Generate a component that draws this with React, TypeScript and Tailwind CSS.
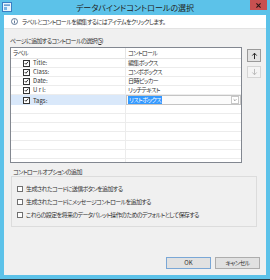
import React from 'react'

const ROWS = [
  { label: 'Title:', control: '編集ボックス' },
  { label: 'Class:', control: 'コンボボックス' },
  { label: 'Date:', control: '日時ピッカー' },
  { label: 'U r l:', control: 'リッチテキスト' },
]

const OPTIONS = [
  '生成されたコードに送信ボタンを追加する',
  '生成されたコードにメッセージコントロールを追加する',
  'これらの設定を将来のデータパレット操作のためのデフォルトとして保存する',
]

function RowCheck() {
  return (
    <div className="w-[7px] h-[7px] border border-[#333] bg-white flex items-center justify-center shrink-0">
      <svg viewBox="0 0 7 7" className="w-[6px] h-[6px]">
        <path d="M1 3.6L2.7 5.3L6 1.4" stroke="#222" strokeWidth="1.3" fill="none" />
      </svg>
    </div>
  )
}

export default function App() {
  return (
    <div className="w-[270px] h-[280px] bg-[#5cc2e9] flex flex-col overflow-hidden border-b border-[#2d3a44] font-['Noto_Sans_CJK_JP',sans-serif] [font-feature-settings:'palt'] text-[#333]">
      {/* title bar */}
      <div className="h-[15px] flex">
        <div className="w-[20px] pl-[2px] pt-[2px]">
          <svg viewBox="0 0 10 10" className="w-[10px] h-[10px]">
            <rect x="0.5" y="0.5" width="9" height="9" fill="#eaf5fc" stroke="#3a7fc4" />
            <rect x="2" y="2.5" width="6" height="1.2" fill="#3a7fc4" />
            <rect x="2" y="5" width="3" height="3" fill="#7ab6e4" />
          </svg>
        </div>
        <div className="flex-1 text-center text-[8px] leading-[15px] text-[#222]">データバインドコントロールの選択</div>
        <div className="w-[20px]">
          <div className="w-[17px] h-[10px] bg-[#c75050] flex items-center justify-center">
            <svg viewBox="0 0 6 6" className="w-[5px] h-[5px]">
              <path d="M0.5 0.5L5.5 5.5M5.5 0.5L0.5 5.5" stroke="#2a1414" strokeWidth="1.3" />
            </svg>
          </div>
        </div>
      </div>

      {/* body */}
      <div className="flex-1 mx-[4px] mb-[4px] bg-[#f0f0f0] flex flex-col text-[6px] tracking-[-0.6px] leading-[9px]">
        <div className="h-[14px] bg-white border-b border-[#e3e3e3] flex items-center pl-[7px]">
          <svg viewBox="0 0 7 7" className="w-[7px] h-[7px] shrink-0">
            <circle cx="3.5" cy="3.5" r="3" stroke="#3d5a80" strokeWidth="0.8" fill="white" />
            <rect x="3.1" y="1.5" width="0.8" height="0.8" fill="#3d5a80" />
            <rect x="3.1" y="2.8" width="0.8" height="2.6" fill="#3d5a80" />
          </svg>
          <span className="ml-[4px]">ラベルとコントロールを編集するにはアイテムをクリックします。</span>
        </div>

        <div className="mt-[7px] pl-[6px]">
          ページに追加するコントロールの選択(<span className="underline">S</span>)
        </div>

        <div className="mt-[2px] pl-[6px] flex">
          <div className="w-[232px] h-[116px] border border-[#828790] bg-white flex flex-col overflow-hidden">
            <div className="h-[11px] shrink-0 grid grid-cols-[115px_1fr] border-b border-[#e5e5e5]">
              <div className="pl-[2px] border-r border-[#e5e5e5] leading-[10px]">ラベル</div>
              <div className="pl-[2px] leading-[10px]">コントロール</div>
            </div>
            {ROWS.map(r => (
              <div key={r.label} className="h-[9px] shrink-0 grid grid-cols-[115px_1fr] border-b border-[#ececec]">
                <div className="pl-[12px] flex items-center border-r border-[#ececec]">
                  <RowCheck />
                  <span className="ml-[3px] leading-[8px] tracking-[0px]">{r.label}</span>
                </div>
                <div className="pl-[2px] leading-[8px]">{r.control}</div>
              </div>
            ))}
            <div className="h-[10px] shrink-0 grid grid-cols-[115px_1fr] border-b border-[#ececec]">
              <div className="pl-[12px] flex items-center bg-[#d9e8fa]">
                <RowCheck />
                <span className="ml-[3px] leading-[9px] tracking-[0px]">Tags:</span>
              </div>
              <div className="flex items-center border border-[#c4c4c4] bg-[#fbfbfb] pl-[1px]">
                <span className="bg-[#3399ff] text-white leading-[8px] px-[1px]">リストボックス</span>
                <div className="ml-auto mr-[1px] w-[8px] h-[8px] border border-[#c8c8c8] bg-white flex items-center justify-center">
                  <svg viewBox="0 0 6 6" className="w-[4px] h-[4px]">
                    <path d="M1 2L3 4L5 2" stroke="#555" strokeWidth="0.9" fill="none" />
                  </svg>
                </div>
              </div>
            </div>
            {[0, 1, 2, 3, 4, 5, 6].map(i => (
              <div key={i} className="h-[9px] shrink-0 grid grid-cols-[115px_1fr] border-b border-[#ececec]">
                <div className="border-r border-[#ececec]" />
                <div />
              </div>
            ))}
          </div>

          <div className="ml-[5px] flex flex-col">
            <div className="mt-[2px] w-[14px] h-[13px] bg-[#e3e3e3] border border-[#9a9a9a] flex items-center justify-center">
              <svg viewBox="0 0 8 9" className="w-[7px] h-[8px]">
                <path d="M4 8V1.5M1.5 4L4 1.3L6.5 4" stroke="#222" strokeWidth="1.1" fill="none" />
              </svg>
            </div>
            <div className="mt-[4px] w-[14px] h-[12px] bg-[#f4f4f4] border border-[#d5d5d5] flex items-center justify-center">
              <svg viewBox="0 0 8 9" className="w-[7px] h-[8px]">
                <path d="M4 1V7.5M1.5 5L4 7.7L6.5 5" stroke="#b5b5b5" strokeWidth="1" fill="none" />
              </svg>
            </div>
          </div>
        </div>

        <div className="mt-[4px] pl-[9px]">コントロールオプションの追加</div>

        <div className="ml-[7px] mr-[9px] h-[51px] border border-[#dcdcdc] pt-[5px] flex flex-col">
          {OPTIONS.map(o => (
            <div key={o} className="h-[13px] flex items-center pl-[5px]">
              <div className="w-[6px] h-[6px] border border-[#707070] bg-white shrink-0" />
              <span className="ml-[3px]">{o}</span>
            </div>
          ))}
        </div>

        <div className="mt-[30px] flex justify-end gap-[4px] pr-[6px]">
          <div className="w-[45px] h-[12px] bg-[#e1e1e1] border border-[#7aa7d6] flex items-center justify-center leading-[10px] tracking-[0px]">OK</div>
          <div className="w-[45px] h-[12px] bg-[#e1e1e1] border border-[#adadad] flex items-center justify-center leading-[10px]">キャンセル</div>
        </div>
      </div>
    </div>
  )
}
